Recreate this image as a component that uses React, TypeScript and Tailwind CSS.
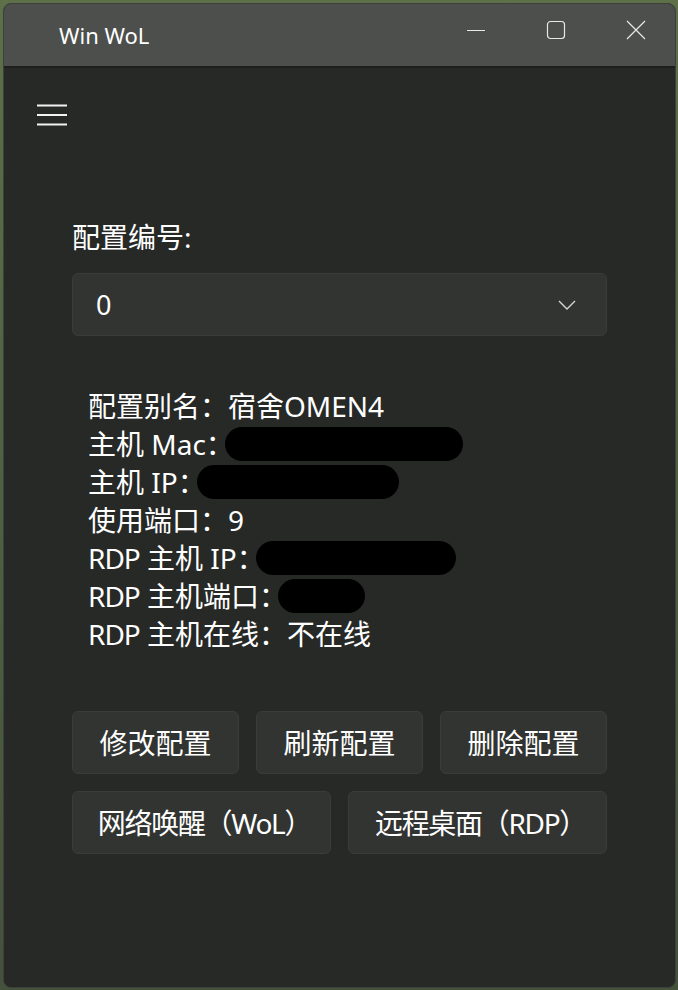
import React from "react";

const font = {
  fontFamily: '"Noto Sans", "Noto Sans CJK SC", sans-serif',
};

function Redact({ w }: { w: number }) {
  return (
    <span
      className="ml-[-9px] inline-block h-[34px] rounded-full bg-black align-middle"
      style={{ width: w }}
    />
  );
}

export default function App() {
  const rows: React.ReactNode[] = [
    <>配置别名：宿舍OMEN4</>,
    <>
      主机 Mac：<Redact w={238} />
    </>,
    <>
      主机 IP：<Redact w={202} />
    </>,
    <>使用端口：9</>,
    <>
      <span className="tracking-[-1px]">RDP</span>&nbsp;主机 IP：<Redact w={200} />
    </>,
    <>
      <span className="tracking-[-1px]">RDP</span>&nbsp;主机端口：<Redact w={87} />
    </>,
    <>
      <span className="tracking-[-1px]">RDP</span>&nbsp;主机在线：不在线
    </>,
  ];
  return (
    <div
      className="h-[990px] w-[678px] bg-gradient-to-b from-[#5d7048] via-[#4f6040] to-[#44523c] pt-[3px] pl-[3px] pr-[2px] pb-[2px]"
      style={font}
    >
      <div className="flex h-full flex-col overflow-hidden rounded-[8px] border border-[#3e403d] bg-[#272927] text-white">
        {/* title bar */}
        <div className="flex h-[62px] shrink-0 bg-[#4d4f4c]">
          <div className="flex items-center pl-[55px] pt-[1px] text-[22px] text-white">
            Win WoL
          </div>
          <div className="ml-auto flex h-[52px] self-start">
            <div className="flex h-full w-[80px] items-center justify-center pl-[2px]">
              <svg width="20" height="20" viewBox="0 0 20 20">
                <line x1="1" y1="10.5" x2="19" y2="10.5" stroke="#e8e8e8" strokeWidth="1.2" />
              </svg>
            </div>
            <div className="flex h-full w-[80px] items-center justify-center pl-[2px]">
              <svg width="20" height="20" viewBox="0 0 20 20">
                <rect x="1.5" y="1.5" width="17" height="17" rx="3" fill="none" stroke="#e8e8e8" strokeWidth="1.2" />
              </svg>
            </div>
            <div className="flex h-full w-[80px] items-center justify-center pl-[2px]">
              <svg width="20" height="20" viewBox="0 0 20 20">
                <path d="M1 1 L19 19 M19 1 L1 19" stroke="#e8e8e8" strokeWidth="1.2" />
              </svg>
            </div>
          </div>
        </div>
        <div className="h-[2px] shrink-0 bg-[#1d1e1d]" />
        {/* body */}
        <div className="flex flex-col">
          <div className="ml-[32px] mt-[36px] h-[22px] w-[32px]">
            <svg width="32" height="22" viewBox="0 0 32 22">
              <path d="M1 1.5 H31 M1 11 H31 M1 20.5 H31" stroke="#f2f2f2" strokeWidth="2" />
            </svg>
          </div>
          <div className="mx-[68px] mt-[92px] flex flex-col">
            <div className="h-[38px] text-[28px] leading-[38px]">配置编号:</div>
            <div className="mt-[17px] flex h-[63px] items-center rounded-[6px] border border-[#3a3c39] bg-[#323431] pl-[23px] pr-[30px]">
              <span className="text-[27px] leading-none">0</span>
              <svg className="ml-auto" width="18" height="10" viewBox="0 0 18 10">
                <path d="M1 1 L9 9 L17 1" fill="none" stroke="#d6d6d6" strokeWidth="1.4" />
              </svg>
            </div>
            <div className="mt-[51px] flex flex-col pl-[16px]">
              {rows.map((r, i) => (
                <div key={i} className="flex h-[38px] items-center whitespace-nowrap text-[28px] leading-[38px]">
                  {r}
                </div>
              ))}
            </div>
            <div className="mt-[58px] grid grid-cols-3 gap-[17px]">
              {["修改配置", "刷新配置", "删除配置"].map((t) => (
                <div
                  key={t}
                  className="flex h-[63px] items-center justify-center rounded-[6px] border border-[#3a3c39] bg-[#323431] text-[28px]"
                >
                  {t}
                </div>
              ))}
            </div>
            <div className="mt-[17px] grid grid-cols-2 gap-[17px]">
              {["网络唤醒（WoL）", "远程桌面（RDP）"].map((t) => (
                <div
                  key={t}
                  className="flex h-[63px] items-center justify-center rounded-[6px] border border-[#3a3c39] bg-[#323431] pl-[6px] text-[28px] tracking-[-1.3px]"
                >
                  {t}
                </div>
              ))}
            </div>
          </div>
        </div>
      </div>
    </div>
  );
}
